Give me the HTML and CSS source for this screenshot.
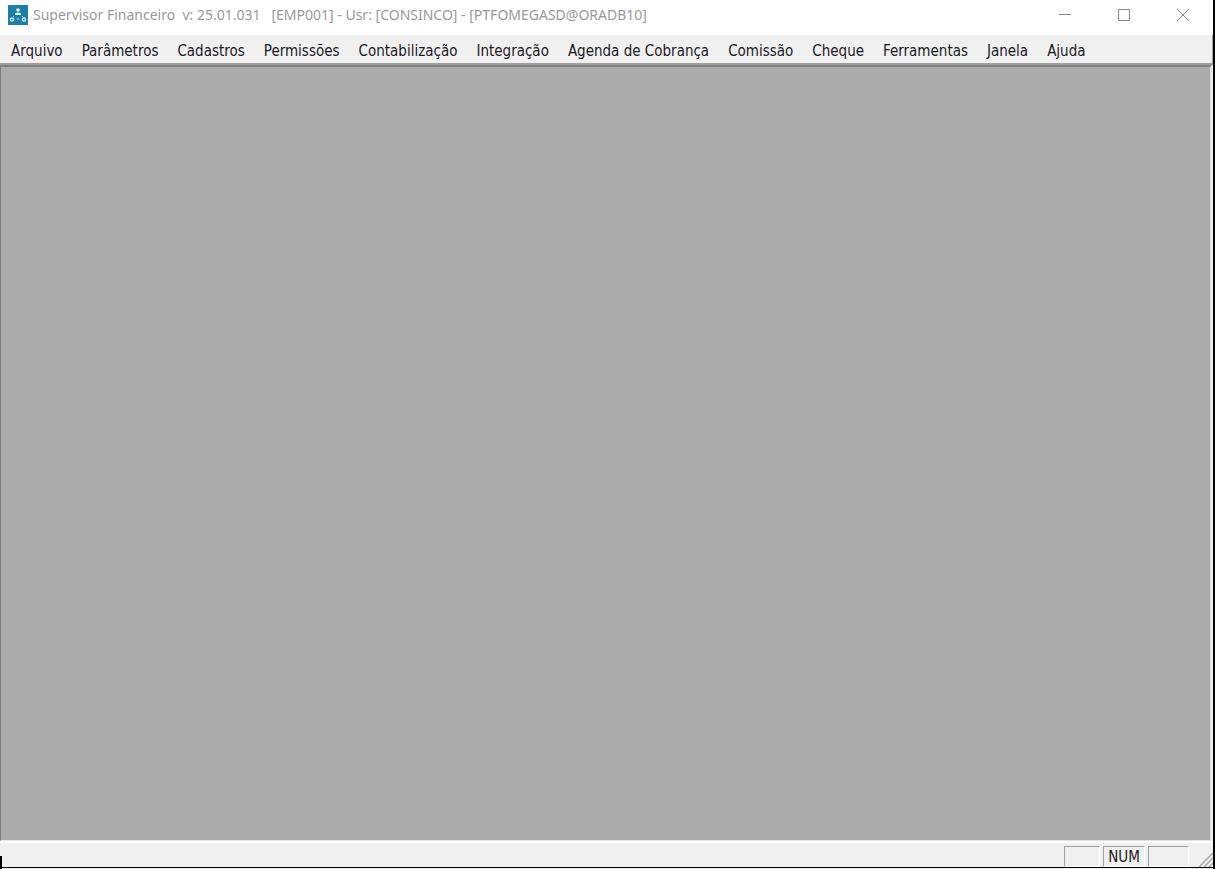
FILE: index.html
```html
<!DOCTYPE html>
<html lang="pt-BR">
<head>
    <meta charset="UTF-8">
    <title>Supervisor Financeiro</title>
    <link rel="stylesheet" href="styles.css">
</head>
<body>
    <div class="window">
        <header class="titlebar">
            <svg class="app-icon" viewBox="0 0 20 20" aria-hidden="true">
                <rect width="20" height="20" fill="#1c80a6"/>
                <circle cx="10" cy="5" r="1.8" fill="#e8f3f7"/>
                <path d="M7 10V9q0-1.5 3-1.5t3 1.5v1z" fill="#e8f3f7"/>
                <circle cx="4" cy="14.5" r="1.6" fill="none" stroke="#c5e0ea" stroke-width="1.5"/>
                <circle cx="16" cy="14.5" r="1.6" fill="none" stroke="#c5e0ea" stroke-width="1.5"/>
                <path d="M8.5 14h3M5 12l1-1M15 12l-1-1" stroke="#9fcbdc" fill="none"/>
            </svg>
            <span class="title">Supervisor Financeiro&nbsp; v: 25.01.031&nbsp;&nbsp; [EMP001] - Usr: [CONSINCO] - [PTFOMEGASD@ORADB10]</span>
            <div class="controls">
                <button type="button" aria-label="Minimizar"><svg viewBox="0 0 12 12"><path d="M0 5.5h12"/></svg></button>
                <button type="button" aria-label="Maximizar"><svg viewBox="0 0 12 12"><path d="M.5.5h11v11H.5z"/></svg></button>
                <button type="button" aria-label="Fechar"><svg viewBox="0 0 12 12"><path d="M0 0l12 12M12 0L0 12"/></svg></button>
            </div>
        </header>

        <nav class="menubar">
            <button type="button">Arquivo</button>
            <button type="button">Parâmetros</button>
            <button type="button">Cadastros</button>
            <button type="button">Permissões</button>
            <button type="button">Contabilização</button>
            <button type="button">Integração</button>
            <button type="button">Agenda de Cobrança</button>
            <button type="button">Comissão</button>
            <button type="button">Cheque</button>
            <button type="button">Ferramentas</button>
            <button type="button">Janela</button>
            <button type="button">Ajuda</button>
        </nav>

        <main class="workspace"></main>

        <footer class="statusbar">
            <span class="cell"></span>
            <span class="cell num">NUM</span>
            <span class="cell last"></span>
            <svg class="grip" viewBox="0 0 14 14" aria-hidden="true">
                <path d="M0 14L14 0M5 14l9-9M10 14l4-4"/>
            </svg>
        </footer>
        <div class="edge-mark"></div>
    </div>
</body>
</html>
```
FILE: styles.css
```css
* {
    box-sizing: border-box;
}

body {
    margin: 0;
    background: #f0f0f0;
    font-family: "DejaVu Sans Condensed", "Noto Sans", sans-serif;
}

button {
    padding: 0;
    border: none;
    background: none;
    font: inherit;
    color: inherit;
}

.window {
    position: relative;
    display: flex;
    flex-direction: column;
    height: 100vh;
    border-right: 2px solid #000;
    padding-bottom: 1px;
}

/* Title bar */
.titlebar {
    display: flex;
    align-items: center;
    height: 35px;
    padding: 0 1px 6px 8px;
    background: #fff;
}

.app-icon {
    width: 20px;
    height: 20px;
    margin-right: 5px;
}

.title {
    font-family: "Noto Sans", sans-serif;
    font-size: 14px;
    color: #999;
    white-space: nowrap;
}

.controls {
    display: flex;
    margin-left: auto;
}

.controls button {
    display: flex;
    align-items: center;
    justify-content: center;
    width: 59px;
    height: 29px;
}

.controls svg {
    width: 12px;
    height: 12px;
    fill: none;
    stroke: #8a8a8a;
}

/* Menu bar */
.menubar {
    display: flex;
    align-items: center;
    gap: 19px;
    height: 30px;
    padding: 3px 0 0 11px;
    border-right: 1px solid #a0a0a0;
    border-bottom: 2px solid #a0a0a0;
    background: #f0f0f0;
    font-size: 15px;
    color: #1a1a24;
    white-space: nowrap;
}

/* Client area */
.workspace {
    flex: 1;
    margin-right: 1px;
    border: 1px solid #808080;
    border-top-width: 2px;
    border-right: 2px solid #e3e3e3;
    border-bottom: 1px solid #e3e3e3;
    background: #ababab;
}

/* Status bar */
.statusbar {
    display: flex;
    align-items: flex-end;
    justify-content: flex-end;
    gap: 3px;
    height: 27px;
    border-top: 2px solid #fff;
    border-bottom: 1px solid #000;
    background: #f0f0f0;
}

.cell {
    width: 36px;
    height: 21px;
    border: 1px solid #a0a0a0;
    border-right-color: #fff;
    border-bottom-color: #fff;
}

.num {
    width: 42px;
    font-size: 15px;
    line-height: 20px;
    text-align: center;
    color: #1a1a24;
}

.last {
    width: 41px;
}

.grip {
    width: 14px;
    height: 14px;
    margin-left: 7px;
    fill: none;
    stroke: #a8a8a8;
    stroke-width: 1.5;
}

.edge-mark {
    position: absolute;
    left: 0;
    bottom: 0;
    width: 2px;
    height: 13px;
    background: #000;
}
```
